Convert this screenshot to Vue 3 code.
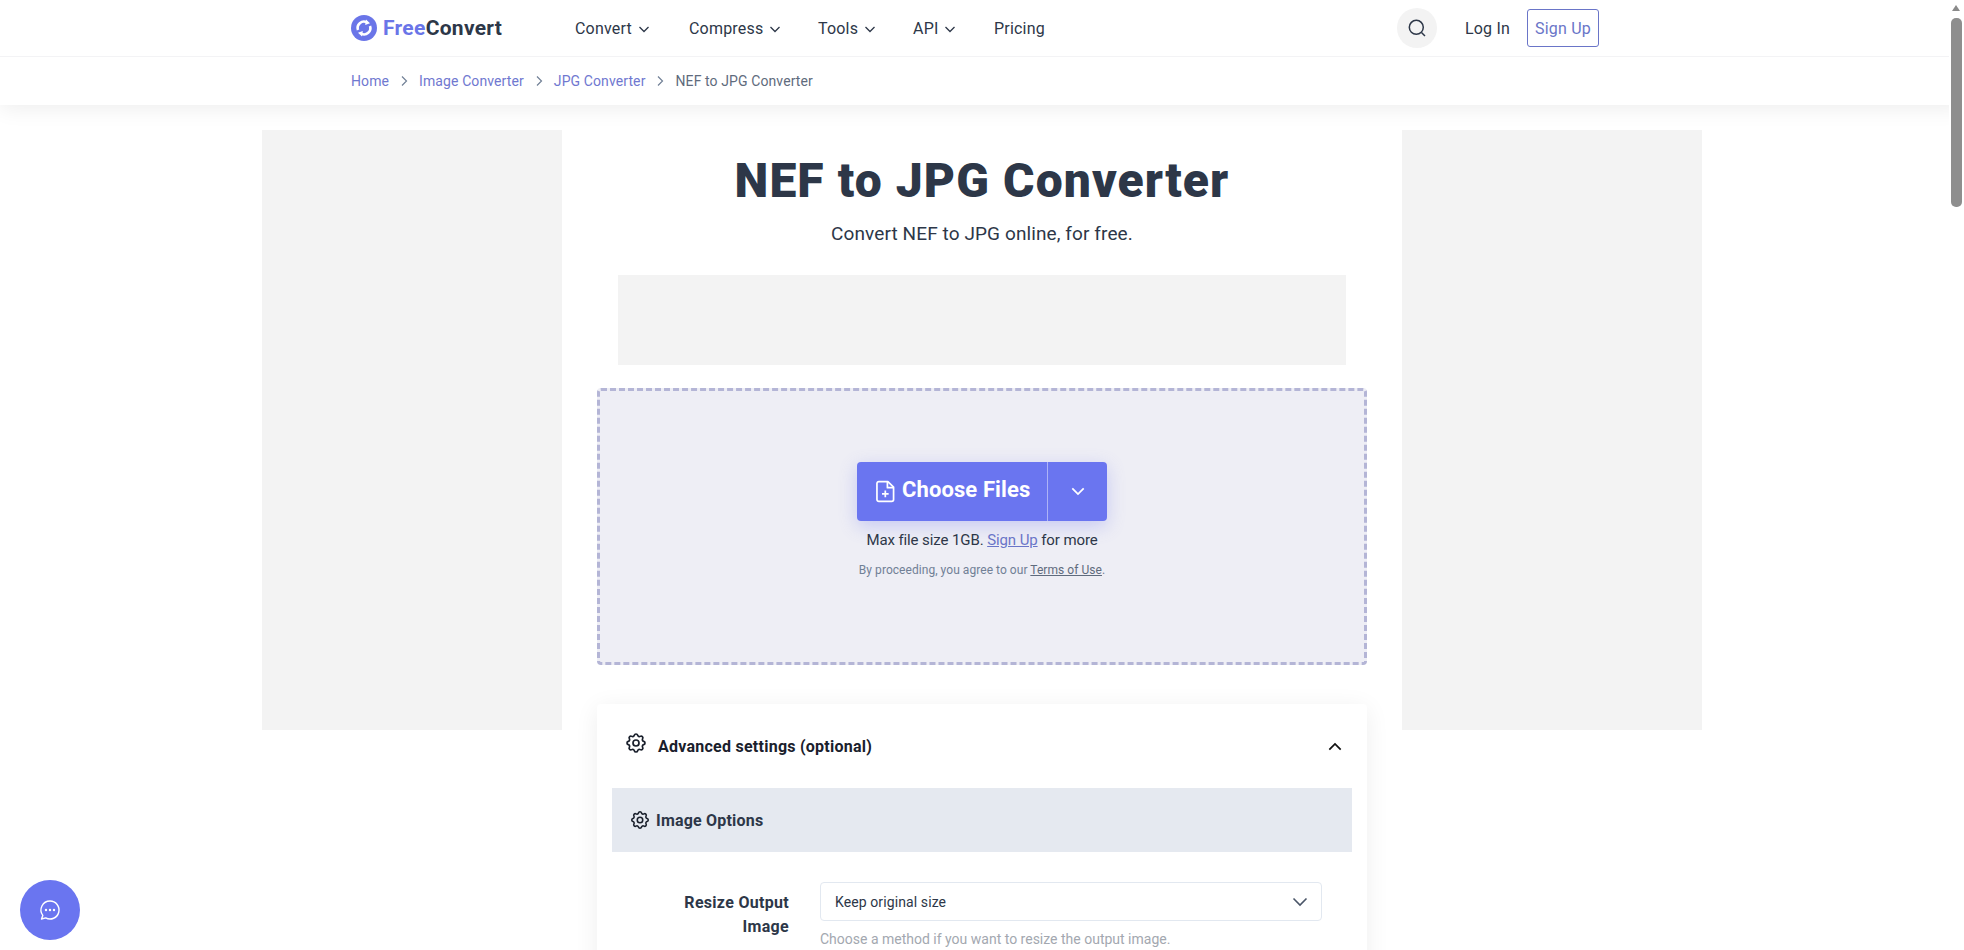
<template>
  <div class="page">
    <header class="topbar">
      <div class="nav-row">
        <a class="logo">
          <svg width="26" height="26" viewBox="0 0 26 26">
            <circle cx="13" cy="13" r="13" fill="#6a75e8" />
            <path d="M7 15a6.300 6.300 0 0 1 8.800-7.700" fill="none" stroke="#fff" stroke-width="2.600" />
            <path d="M19 11a6.300 6.300 0 0 1-8.800 7.700" fill="none" stroke="#fff" stroke-width="2.600" />
            <path d="M15 4.500l4 3.700-4.800 1.800zM11 21.500l-4-3.700 4.800-1.800z" fill="#fff" />
          </svg>
          <span class="logo-text"><span class="free">Free</span>Convert</span>
        </a>
        <nav class="menu">
          <a v-for="item in menu" :key="item.label" class="menu-item" :style="{ width: item.width + 'px' }">
            {{ item.label }}
            <svg v-if="item.drop" width="12" height="12" viewBox="0 0 12 12" class="menu-chev">
              <path d="M1.500 4l4.500 4.500L10.500 4" fill="none" stroke="#2d3748" stroke-width="1.300" />
            </svg>
          </a>
        </nav>
        <button class="search">
          <svg width="20" height="20" viewBox="0 0 20 20">
            <circle cx="9.300" cy="9.300" r="7" fill="none" stroke="#2d3748" stroke-width="1.500" />
            <path d="M14.500 14.500L18 18" stroke="#2d3748" stroke-width="1.500" />
          </svg>
        </button>
        <a class="login">Log In</a>
        <a class="signup">Sign Up</a>
      </div>
      <div class="crumbs">
        <template v-for="(c, i) in crumbs" :key="c">
          <a class="crumb" :class="{ current: i === crumbs.length - 1 }">{{ c }}</a>
          <svg v-if="i < crumbs.length - 1" width="10" height="12" viewBox="0 0 10 12" class="crumb-sep">
            <path d="M3 1.500L7.500 6 3 10.500" fill="none" stroke="#718096" stroke-width="1.200" />
          </svg>
        </template>
      </div>
    </header>

    <main class="columns">
      <aside class="ad-side"></aside>
      <section class="center">
        <h1>NEF to JPG Converter</h1>
        <p class="subtitle">Convert NEF to JPG online, for free.</p>
        <div class="ad-banner"></div>

        <div class="dropzone">
          <div class="choose">
            <div class="choose-main">
              <svg width="19" height="23" viewBox="0 0 20 24" fill="none" stroke="#fff" stroke-width="1.800" stroke-linejoin="round">
                <path d="M3 1.500h9.500L18.500 7.500v13a2 2 0 0 1-2 2H3a2 2 0 0 1-2-2v-17a2 2 0 0 1 2-2z" />
                <path d="M12 1.500v6.500h6.500M9.800 11v7M6.300 14.500h7" />
              </svg>
              <span class="choose-label">Choose Files</span>
            </div>
            <div class="choose-more">
              <svg width="14" height="9" viewBox="0 0 16 10">
                <path d="M1.500 1.500L8 8l6.500-6.500" fill="none" stroke="#fff" stroke-width="2" />
              </svg>
            </div>
          </div>
          <p class="limit">Max file size 1GB. <a>Sign Up</a> for more</p>
          <p class="terms">By proceeding, you agree to our <a>Terms of Use</a>.</p>
        </div>

        <div class="settings">
          <div class="settings-head">
            <svg class="gear head-gear" width="24" height="24" viewBox="0 0 24 24">
              <path :d="cogPath" />
              <circle cx="12" cy="12" r="3" />
            </svg>
            <span class="settings-title">Advanced settings (optional)</span>
            <svg class="collapse" width="14" height="9" viewBox="0 0 16 10">
              <path d="M1.500 8.500L8 2l6.500 6.500" fill="none" stroke="#111" stroke-width="2" />
            </svg>
          </div>
          <div class="band">
            <svg class="gear" width="22" height="22" viewBox="0 0 24 24">
              <path :d="cogPath" />
              <circle cx="12" cy="12" r="3" />
            </svg>
            <span>Image Options</span>
          </div>
          <div class="field">
            <label>Resize Output Image</label>
            <div class="control">
              <div class="select">
                <span>Keep original size</span>
                <svg width="16" height="10" viewBox="0 0 16 10">
                  <path d="M1.500 1.500L8 8l6.500-6.500" fill="none" stroke="#4a5568" stroke-width="1.600" />
                </svg>
              </div>
              <p class="hint">Choose a method if you want to resize the output image.</p>
            </div>
          </div>
        </div>
      </section>
      <aside class="ad-side"></aside>
    </main>

    <button class="chat">
      <svg width="24" height="24" viewBox="0 0 24 24">
        <path d="M12 3a9 9 0 1 1-4.300 16.900L3.500 21l1.300-3.600A9 9 0 0 1 12 3z" fill="none" stroke="#fff" stroke-width="1.400" stroke-linejoin="round" />
        <circle cx="8" cy="12" r="1.200" fill="#fff" />
        <circle cx="12" cy="12" r="1.200" fill="#fff" />
        <circle cx="16" cy="12" r="1.200" fill="#fff" />
      </svg>
    </button>

    <div class="scrollbar">
      <span class="arrow"></span>
      <span class="thumb"></span>
    </div>
  </div>
</template>

<script setup>
const menu = [
  { label: 'Convert', drop: true, width: 114 },
  { label: 'Compress', drop: true, width: 129 },
  { label: 'Tools', drop: true, width: 95 },
  { label: 'API', drop: true, width: 81 },
  { label: 'Pricing', drop: false, width: 60 },
]

const crumbs = ['Home', 'Image Converter', 'JPG Converter', 'NEF to JPG Converter']

const cogPath =
  'M10.325 4.317c.426-1.756 2.924-1.756 3.35 0a1.724 1.724 0 002.573 1.066c1.543-.94 3.31.826 2.37 2.37a1.724 1.724 0 001.065 2.572c1.756.426 1.756 2.924 0 3.35a1.724 1.724 0 00-1.066 2.573c.94 1.543-.826 3.31-2.37 2.37a1.724 1.724 0 00-2.572 1.065c-.426 1.756-2.924 1.756-3.35 0a1.724 1.724 0 00-2.573-1.066c-1.543.94-3.31-.826-2.37-2.37a1.724 1.724 0 00-1.065-2.572c-1.756-.426-1.756-2.924 0-3.35a1.724 1.724 0 001.066-2.573c-.94-1.543.826-3.31 2.37-2.37.996.608 2.296.07 2.572-1.065z'
</script>

<style>
html,
body {
  height: 950px;
  overflow: hidden;
  background: #fff;
}
</style>

<style scoped>
.page {
  height: 950px;
  overflow: hidden;
  font-family: Roboto, 'Liberation Sans', sans-serif;
  color: #2d3748;
}
p,
h1 {
  margin: 0;
}
button {
  border: 0;
  padding: 0;
}

/* header */
.topbar {
  height: 105px;
  box-shadow: 0 4px 20px rgba(0, 0, 0, 0.07);
}
.nav-row {
  height: 57px;
  box-sizing: border-box;
  padding: 0 365px 0 351px;
  border-bottom: 1px solid #f3f3f5;
  display: flex;
  align-items: center;
}
.logo {
  display: flex;
  align-items: center;
  gap: 6px;
  width: 224px;
}
.logo-text {
  font-size: 21px;
  font-weight: 700;
  letter-spacing: 0.3px;
}
.free {
  color: #6a75e8;
}
.menu {
  display: flex;
  align-items: center;
}
.menu-item {
  font-size: 16px;
  letter-spacing: 0.2px;
  white-space: nowrap;
  display: flex;
  align-items: center;
  gap: 6px;
}
.menu-chev {
  margin-top: 1px;
}
.search {
  width: 40px;
  height: 40px;
  border-radius: 50%;
  background: #f3f3f3;
  display: flex;
  align-items: center;
  justify-content: center;
  margin-left: auto;
}
.login {
  margin-left: 28px;
  font-size: 16px;
  letter-spacing: 0.2px;
}
.signup {
  margin-left: 17px;
  width: 72px;
  height: 38px;
  box-sizing: border-box;
  border: 1px solid #6a75c8;
  border-radius: 3px;
  color: #6a75c8;
  font-size: 16px;
  letter-spacing: 0.2px;
  display: flex;
  align-items: center;
  justify-content: center;
}
.crumbs {
  height: 47px;
  padding-left: 351px;
  display: flex;
  align-items: center;
  font-size: 14px;
  letter-spacing: 0.1px;
}
.crumb {
  color: #7078d0;
}
.crumb.current {
  color: #5f6b7d;
}
.crumb-sep {
  margin: 0 10px;
}

/* columns */
.columns {
  width: 1440px;
  margin: 25px 0 0 262px;
  display: grid;
  grid-template-columns: 300px 840px 300px;
  align-items: start;
}
.ad-side {
  height: 600px;
  background: #f3f3f3;
}
.center {
  display: flex;
  flex-direction: column;
  align-items: center;
}
h1 {
  font-size: 48px;
  line-height: 60px;
  margin-top: 21px;
  font-weight: 900;
  letter-spacing: 1.1px;
  color: #2d3748;
}
.subtitle {
  margin-top: 11px;
  font-size: 19px;
  line-height: 24px;
  letter-spacing: 0.1px;
}
.ad-banner {
  width: 728px;
  height: 90px;
  margin-top: 29px;
  background: #f3f3f3;
}
.dropzone {
  width: 770px;
  height: 277px;
  margin-top: 23px;
  box-sizing: border-box;
  border: 3px dashed #b4b5d6;
  border-radius: 4px;
  background: #eeeef5;
  display: flex;
  flex-direction: column;
  align-items: center;
  padding-top: 71px;
}
.choose {
  width: 250px;
  height: 59px;
  display: flex;
  border-radius: 4px;
  background: #6a75f0;
  color: #fff;
  box-shadow: 0 5px 18px rgba(106, 117, 240, 0.3);
}
.choose-main {
  width: 191px;
  display: flex;
  align-items: center;
  gap: 7px;
  padding-left: 19px;
  box-sizing: border-box;
  border-right: 1px solid rgba(255, 255, 255, 0.45);
}
.choose-label {
  font-size: 22px;
  font-weight: 700;
  letter-spacing: 0.1px;
  padding-bottom: 4px;
}
.choose-more {
  flex: 1;
  display: flex;
  align-items: center;
  justify-content: center;
}
.limit {
  margin-top: 9px;
  font-size: 15px;
  line-height: 20px;
  letter-spacing: -0.1px;
}
.limit a {
  color: #6a75c8;
  text-decoration: underline;
}
.terms {
  margin-top: 12px;
  font-size: 12px;
  line-height: 16px;
  color: #718096;
  letter-spacing: 0.05px;
}
.terms a {
  color: #5f6b7d;
  text-decoration: underline;
}

/* settings card */
.settings {
  width: 770px;
  margin-top: 39px;
  padding: 0 15px 30px;
  box-sizing: border-box;
  border-radius: 4px;
  background: #fff;
  box-shadow: 0 4px 24px rgba(0, 0, 0, 0.07);
}
.settings-head {
  height: 84px;
  display: flex;
  align-items: center;
  padding: 0 15px;
}
.head-gear {
  margin-left: -3px;
  margin-top: -6px;
}
.settings-title {
  margin-left: 10px;
  font-size: 16px;
  font-weight: 700;
  color: #1a202c;
  letter-spacing: 0.25px;
}
.collapse {
  margin-left: auto;
  margin-right: -5px;
}
.gear {
  fill: none;
  stroke: #1a202c;
  stroke-width: 1.7;
  flex: none;
}
.band {
  height: 64px;
  background: #e5e9f0;
  display: flex;
  align-items: center;
  gap: 5px;
  padding-left: 17px;
  font-size: 16px;
  font-weight: 700;
  letter-spacing: 0.2px;
}
.field {
  display: flex;
  margin-top: 30px;
}
.field label {
  width: 120px;
  margin-left: 57px;
  text-align: right;
  font-size: 16px;
  font-weight: 700;
  line-height: 24px;
  letter-spacing: 0.3px;
  margin-top: 9px;
}
.control {
  width: 502px;
  margin-left: 31px;
}
.select {
  height: 39px;
  box-sizing: border-box;
  border: 1px solid #e2e8f0;
  border-radius: 4px;
  display: flex;
  align-items: center;
  justify-content: space-between;
  padding: 0 13px 0 14px;
  font-size: 14px;
  letter-spacing: 0.1px;
}
.hint {
  margin-top: 8px;
  font-size: 14px;
  line-height: 20px;
  color: #a3a8b0;
}

/* floating */
.chat {
  position: fixed;
  left: 20px;
  top: 880px;
  width: 60px;
  height: 60px;
  border-radius: 50%;
  background: #6a75f0;
  display: flex;
  align-items: center;
  justify-content: center;
}
.scrollbar {
  position: fixed;
  top: 0;
  right: 0;
  width: 15px;
  height: 950px;
  background: #fff;
}
.arrow {
  position: absolute;
  left: 3px;
  top: 5px;
  border: 4.500px solid transparent;
  border-top: 0;
  border-bottom: 6px solid #8a8a8a;
}
.thumb {
  position: absolute;
  left: 2px;
  top: 18px;
  width: 11px;
  height: 189px;
  border-radius: 5px;
  background: #8e8e8e;
}
</style>
